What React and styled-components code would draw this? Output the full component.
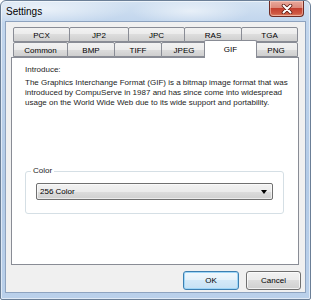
import React, { useState } from "react";
import styled, { createGlobalStyle } from "styled-components";

const topTabs = [
  { label: "PCX", width: 57 },
  { label: "JP2", width: 60 },
  { label: "JPC", width: 57 },
  { label: "RAS", width: 58 },
  { label: "TGA", width: 57 },
];

const bottomTabs = [
  { label: "Common", width: 55 },
  { label: "BMP", width: 48 },
  { label: "TIFF", width: 48 },
  { label: "JPEG", width: 46 },
  { label: "GIF", width: 49 },
  { label: "PNG", width: 44 },
];

function CloseIcon() {
  return (
    <svg width="12" height="10" viewBox="0 0 12 10">
      <path d="M2.5 1.5 L9.5 8.5 M9.5 1.5 L2.5 8.5" stroke="#5a1a12" strokeWidth="3.6" strokeLinecap="round" />
      <path d="M2.5 1.5 L9.5 8.5 M9.5 1.5 L2.5 8.5" stroke="#ffffff" strokeWidth="2" strokeLinecap="round" />
    </svg>
  );
}

function App() {
  const [active, setActive] = useState("GIF");
  return (
    <>
      <GlobalStyle />
      <Window>
        <TitleBar>
          <Title>Settings</Title>
          <CloseButton>
            <CloseIcon />
          </CloseButton>
        </TitleBar>
        <Client>
          <TabStrip>
            <TabRow>
              {topTabs.map((t, i) => (
                <Tab key={t.label} $width={t.width} $first={i === 0} onClick={() => setActive(t.label)}>
                  {t.label}
                </Tab>
              ))}
            </TabRow>
            <TabRow>
              {bottomTabs.map((t, i) => (
                <Tab
                  key={t.label}
                  $width={t.width}
                  $first={i === 0}
                  $selected={active === t.label}
                  $afterSelected={i > 0 && active === bottomTabs[i - 1].label}
                  onClick={() => setActive(t.label)}
                >
                  {t.label}
                </Tab>
              ))}
            </TabRow>
          </TabStrip>
          <Panel>
            <Intro>
              <IntroTitle>Introduce:</IntroTitle>
              <IntroLine>The Graphics Interchange Format (GIF) is a bitmap image format that was</IntroLine>
              <IntroLine>introduced by CompuServe in 1987 and has since come into widespread</IntroLine>
              <IntroLine>usage on the World Wide Web due to its wide support and portability.</IntroLine>
            </Intro>
            <GroupBox>
              <Legend>Color</Legend>
              <Combo>
                <span>256 Color</span>
                <Arrow />
              </Combo>
            </GroupBox>
          </Panel>
          <ButtonRow>
            <Button $default>OK</Button>
            <Button>Cancel</Button>
          </ButtonRow>
        </Client>
      </Window>
    </>
  );
}

export default App;

const GlobalStyle = createGlobalStyle`
  * {
    margin: 0;
    padding: 0;
    box-sizing: border-box;
  }
  html, body {
    width: 311px;
    height: 300px;
    overflow: hidden;
    background: #ffffff;
    font-family: "Liberation Sans", Arial, sans-serif;
  }
`;

// aero frame
const Window = styled.div`
  width: 311px;
  height: 300px;
  display: flex;
  flex-direction: column;
  padding: 0 4px 6px 4px;
  border: 1px solid #6b7f97;
  border-radius: 6px 6px 2px 2px;
  background:
    radial-gradient(ellipse 60px 14px at 190px 10px, rgba(255, 255, 255, 0.55), rgba(255, 255, 255, 0)),
    radial-gradient(ellipse 90px 16px at 40px 8px, rgba(255, 255, 255, 0.6), rgba(255, 255, 255, 0)),
    linear-gradient(to bottom, #d3e2f2 0px, #c2d6ed 20px, #b3cbe7 60%, #bad0ea 100%);
  box-shadow: inset 0 0 0 1px rgba(255, 255, 255, 0.55);
`;

const TitleBar = styled.div`
  flex-shrink: 0;
  height: 20px;
  display: flex;
  align-items: flex-start;
  justify-content: space-between;
  padding-left: 1px;
`;

const Title = styled.div`
  font-size: 10px;
  color: #000;
  line-height: 22px;
`;

const CloseButton = styled.div`
  width: 35px;
  height: 16px;
  margin-right: 2px;
  display: flex;
  align-items: center;
  justify-content: center;
  border: 1px solid #6f2b23;
  border-top: none;
  border-radius: 0 0 4px 4px;
  background: linear-gradient(to bottom, #e9a99c 0%, #dc8a7b 45%, #c4402f 50%, #cf5a44 85%, #e08b6e 100%);
  box-shadow: inset 0 0 0 1px rgba(255, 220, 210, 0.5);
`;

const Client = styled.div`
  flex: 1;
  min-height: 0;
  display: flex;
  flex-direction: column;
  padding-bottom: 2px;
  border: 1px solid #8ea3bf;
  background: #f0f0f0;
`;

const TabStrip = styled.div`
  flex-shrink: 0;
  margin: 5px 0 0 7px;
  display: flex;
  flex-direction: column;
`;

const TabRow = styled.div`
  display: flex;
  height: 15px;
  align-items: flex-start;
`;

const Tab = styled.div`
  position: relative;
  width: ${({ $width, $selected }) => ($selected ? $width + 4 : $width)}px;
  height: ${({ $selected }) => ($selected ? 18 : 15)}px;
  margin-left: ${({ $first, $selected, $afterSelected }) =>
    $first ? 0 : $selected || $afterSelected ? -3 : -1}px;
  margin-top: ${({ $selected }) => ($selected ? -2 : 0)}px;
  z-index: ${({ $selected }) => ($selected ? 2 : 0)};
  display: flex;
  align-items: center;
  justify-content: center;
  padding-top: ${({ $selected }) => ($selected ? 0 : 1)}px;
  font-size: 8px;
  color: #000;
  border: 1px solid #898c95;
  border-bottom: ${({ $selected }) => ($selected ? "none" : "1px solid #898c95")};
  border-radius: 2px 2px 0 0;
  background: ${({ $selected }) =>
    $selected ? "#ffffff" : "linear-gradient(to bottom, #f2f2f2 0%, #ebebeb 50%, #dddddd 50%, #cfcfcf 100%)"};
  cursor: default;
`;

const Panel = styled.div`
  flex: 1;
  min-height: 0;
  margin: 0 6px 0 5px;
  padding: 7px 0 0 13px;
  border: 1px solid #898c95;
  background: #ffffff;
`;

const Intro = styled.div`
  font-size: 8px;
  line-height: 10px;
  color: #1c1c1c;
  white-space: nowrap;
`;

const IntroTitle = styled.div`
  margin-bottom: 3px;
`;

const IntroLine = styled.div``;

const GroupBox = styled.div`
  position: relative;
  margin: 63px 14px 0 0;
  padding: 11px 10px 13px 10px;
  border: 1px solid #d5dfe5;
  border-radius: 3px;
`;

const Legend = styled.div`
  position: absolute;
  top: -6px;
  left: 5px;
  padding: 0 2px;
  background: #ffffff;
  font-size: 8px;
  line-height: 10px;
  color: #1c1c1c;
`;

const Combo = styled.div`
  height: 17px;
  display: flex;
  align-items: center;
  justify-content: space-between;
  padding: 0 5px 0 3px;
  font-size: 8px;
  color: #000;
  border: 1px solid #707070;
  border-radius: 2px;
  background: linear-gradient(to bottom, #f2f2f2 0%, #ebebeb 50%, #dddddd 50%, #cfcfcf 100%);
  box-shadow: inset 0 0 0 1px rgba(255, 255, 255, 0.6);
`;

const Arrow = styled.div`
  width: 0;
  height: 0;
  border-left: 3px solid transparent;
  border-right: 3px solid transparent;
  border-top: 4px solid #000;
`;

const ButtonRow = styled.div`
  flex-shrink: 0;
  display: flex;
  justify-content: flex-end;
  gap: 7px;
  margin-top: 6px;
  padding-right: 4px;
`;

const Button = styled.div`
  width: ${({ $default }) => ($default ? 56 : 55)}px;
  height: 19px;
  display: flex;
  align-items: center;
  justify-content: center;
  font-size: 8px;
  color: #000;
  border: 1px solid ${({ $default }) => ($default ? "#3c7fb1" : "#707070")};
  border-radius: 3px;
  background: ${({ $default }) =>
    $default
      ? "linear-gradient(to bottom, #f1f8fd 0%, #e4f1fa 50%, #d3e9f8 50%, #c6e1f4 100%)"
      : "linear-gradient(to bottom, #f2f2f2 0%, #ebebeb 50%, #dddddd 50%, #cfcfcf 100%)"};
  box-shadow: inset 0 0 0 1px ${({ $default }) => ($default ? "#9fd6f7" : "rgba(255, 255, 255, 0.7)")};
`;
